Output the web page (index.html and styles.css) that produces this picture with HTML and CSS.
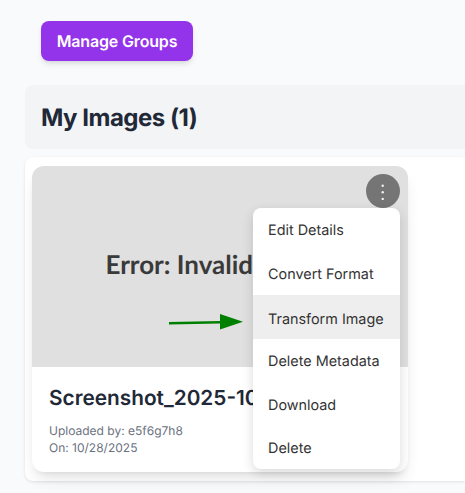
FILE: index.html
```html
<!DOCTYPE html>
<html lang="en">
<head>
<meta charset="utf-8">
<title>My Images</title>
<link rel="stylesheet" href="styles.css">
</head>
<body>
<main class="page">
  <div class="actions"><button class="manage-btn">Manage Groups</button></div>
  <header class="section-head"><h2>My Images (1)</h2></header>
  <section class="gallery">
    <article class="card">
      <div class="thumb">
        <span class="thumb-text">Error: Invalid</span>
        <svg class="arrow" width="78" height="18" viewBox="0 0 78 18" aria-hidden="true">
          <path d="M1 10.2 L52 9.2" stroke="#008000" stroke-width="2.4" fill="none"/>
          <path d="M52 1 L75 8.8 L52 16.5 Z" fill="#008000"/>
        </svg>
        <button class="kebab" aria-label="Options">
          <svg width="4" height="18" viewBox="0 0 4 18" aria-hidden="true">
            <circle cx="1.7" cy="3.7" r="1.2" fill="#f2f2f2"/>
            <circle cx="1.7" cy="10.3" r="1.2" fill="#f2f2f2"/>
            <circle cx="1.7" cy="17" r="1.2" fill="#f2f2f2"/>
          </svg>
        </button>
      </div>
      <div class="info">
        <h3>Screenshot_2025-10</h3>
        <p>Uploaded by: e5f6g7h8</p>
        <p>On: 10/28/2025</p>
      </div>
      <ul class="menu">
        <li>Edit Details</li>
        <li>Convert Format</li>
        <li class="active">Transform Image</li>
        <li>Delete Metadata</li>
        <li class="lowered">Download</li>
        <li>Delete</li>
      </ul>
    </article>
  </section>
</main>
</body>
</html>
```
FILE: styles.css
```css
* { box-sizing: border-box; }
html, body { margin: 0; padding: 0; height: 100%; overflow: hidden; }
body { background: #f9fafb; font-family: Inter, "Liberation Sans", sans-serif; text-rendering: geometricPrecision; }
.page { padding: 21px 0 0 25px; width: 100%; }
.actions { padding-left: 16px; margin-bottom: 24px; }
.manage-btn {
  display: block; width: 152px; height: 40px; border: 0; border-radius: 8px;
  background: #9333ea; color: #fff; font: 600 16px/40px Inter, sans-serif; padding: 0;
  letter-spacing: -0.16px; text-rendering: geometricPrecision;
  box-shadow: 0 4px 6px -1px rgba(0,0,0,.1), 0 2px 4px -2px rgba(0,0,0,.1);
}
.section-head {
  height: 64px; background: #f3f4f6; border-radius: 8px 0 0 8px; padding: 2px 0 0 16px;
  display: flex; align-items: center; margin-bottom: 8px;
}
.section-head h2 { margin: 0; font-size: 24px; font-weight: 700; line-height: 32px; color: #1f2937; letter-spacing: -0.5px; }
.gallery {
  background: #fff; border-radius: 8px 0 0 8px; height: 324px; padding: 9px 0 0 7px;
  box-shadow: 0 1px 3px rgba(0,0,0,.1);
}
.card {
  position: relative; width: 376px; height: 306px; background: #fff; border-radius: 12px;
  box-shadow: 0 10px 15px -3px rgba(0,0,0,.1), 0 4px 6px -4px rgba(0,0,0,.1);
}
.thumb {
  position: relative; height: 201px; background: #e0e0e0; border-radius: 12px 12px 0 0; overflow: hidden;
}
.thumb-text {
  position: absolute; left: 73.5px; top: 81.5px; white-space: nowrap;
  font: 700 26px/32px Lato, sans-serif; color: #3a3a3a;
}
.arrow { position: absolute; left: 136px; top: 147px; }
.kebab {
  position: absolute; right: 8px; top: 8px; width: 34px; height: 34px; padding: 0; border: 0;
  border-radius: 50%; background: #757575; display: flex; align-items: center; justify-content: center;
}
.info { padding: 20px 17px 0; }
.info h3 {
  margin: 0 0 11px; font-size: 20.8px; line-height: 24px; font-weight: 600; color: #1f2937;
  white-space: nowrap; overflow: hidden;
}
.info p { margin: 0; font-size: 12px; line-height: 17px; color: #6b7280; }
.menu {
  position: absolute; left: 221px; top: 42px; width: 147px; margin: 0; padding: 0; list-style: none;
  background: #fff; border-radius: 8px; overflow: hidden;
  box-shadow: 0 4px 12px rgba(0,0,0,.15);
}
.menu li {
  height: 43.5px; line-height: 43.5px; padding: 1px 0 0 15px;
  font-size: 14.4px; color: #333; white-space: nowrap;
}
.menu li.active { background: #eee; padding-top: 3px; }
.menu li.lowered { padding-top: 2px; }
```
